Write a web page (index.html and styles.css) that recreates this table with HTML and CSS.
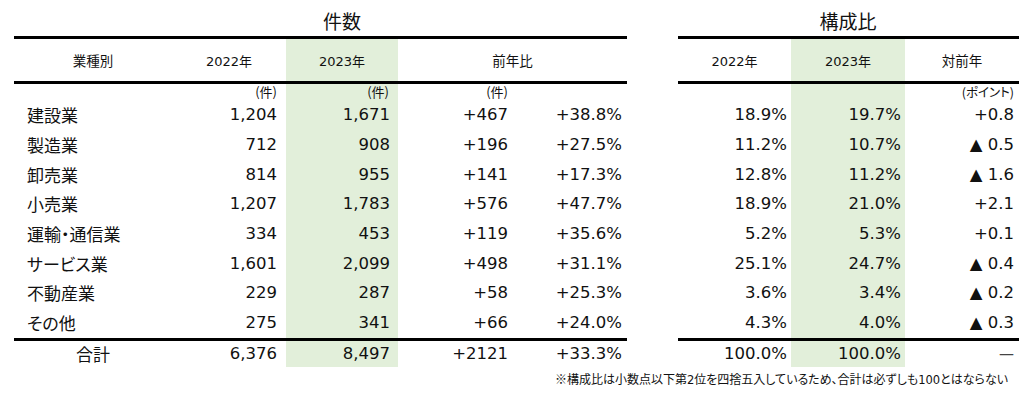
FILE: index.html
```html
<!DOCTYPE html>
<html lang="ja">
<head>
<meta charset="utf-8">
<link rel="stylesheet" href="styles.css">
</head>
<body>
<div class="page">
  <div class="tables">
    <section class="panel left">
      <div class="row title-row"><div class="title c3">件数</div></div>
      <div class="row head">
        <div class="cell">業種別</div>
        <div class="cell">2022年</div>
        <div class="cell green">2023年</div>
        <div class="cell span2">前年比</div>
      </div>
      <div class="row unit">
        <div class="cell"></div>
        <div class="cell num">(件)</div>
        <div class="cell num green">(件)</div>
        <div class="cell num u4">(件)</div>
        <div class="cell"></div>
      </div>
      <div class="row data"><div class="cell label">建設業</div><div class="cell num">1,204</div><div class="cell num green">1,671</div><div class="cell num">+467</div><div class="cell num">+38.8%</div></div>
      <div class="row data"><div class="cell label">製造業</div><div class="cell num">712</div><div class="cell num green">908</div><div class="cell num">+196</div><div class="cell num">+27.5%</div></div>
      <div class="row data"><div class="cell label">卸売業</div><div class="cell num">814</div><div class="cell num green">955</div><div class="cell num">+141</div><div class="cell num">+17.3%</div></div>
      <div class="row data"><div class="cell label">小売業</div><div class="cell num">1,207</div><div class="cell num green">1,783</div><div class="cell num">+576</div><div class="cell num">+47.7%</div></div>
      <div class="row data"><div class="cell label">運輸・通信業</div><div class="cell num">334</div><div class="cell num green">453</div><div class="cell num">+119</div><div class="cell num">+35.6%</div></div>
      <div class="row data"><div class="cell label">サービス業</div><div class="cell num">1,601</div><div class="cell num green">2,099</div><div class="cell num">+498</div><div class="cell num">+31.1%</div></div>
      <div class="row data"><div class="cell label">不動産業</div><div class="cell num">229</div><div class="cell num green">287</div><div class="cell num">+58</div><div class="cell num">+25.3%</div></div>
      <div class="row data"><div class="cell label">その他</div><div class="cell num">275</div><div class="cell num green">341</div><div class="cell num">+66</div><div class="cell num">+24.0%</div></div>
      <div class="row total"><div class="cell label center">合計</div><div class="cell num">6,376</div><div class="cell num green">8,497</div><div class="cell num">+2121</div><div class="cell num">+33.3%</div></div>
    </section>

    <section class="panel right">
      <div class="row title-row"><div class="title c2">構成比</div></div>
      <div class="row head">
        <div class="cell">2022年</div>
        <div class="cell green">2023年</div>
        <div class="cell">対前年</div>
      </div>
      <div class="row unit">
        <div class="cell"></div>
        <div class="cell green"></div>
        <div class="cell num u3">(ポイント)</div>
      </div>
      <div class="row data"><div class="cell num">18.9%</div><div class="cell num green">19.7%</div><div class="cell num">+0.8</div></div>
      <div class="row data"><div class="cell num">11.2%</div><div class="cell num green">10.7%</div><div class="cell num">▲ 0.5</div></div>
      <div class="row data"><div class="cell num">12.8%</div><div class="cell num green">11.2%</div><div class="cell num">▲ 1.6</div></div>
      <div class="row data"><div class="cell num">18.9%</div><div class="cell num green">21.0%</div><div class="cell num">+2.1</div></div>
      <div class="row data"><div class="cell num">5.2%</div><div class="cell num green">5.3%</div><div class="cell num">+0.1</div></div>
      <div class="row data"><div class="cell num">25.1%</div><div class="cell num green">24.7%</div><div class="cell num">▲ 0.4</div></div>
      <div class="row data"><div class="cell num">3.6%</div><div class="cell num green">3.4%</div><div class="cell num">▲ 0.2</div></div>
      <div class="row data"><div class="cell num">4.3%</div><div class="cell num green">4.0%</div><div class="cell num">▲ 0.3</div></div>
      <div class="row total"><div class="cell num">100.0%</div><div class="cell num green">100.0%</div><div class="cell num dash">—</div></div>
    </section>
  </div>
  <p class="note">※構成比は小数点以下第<span class="lat">2</span>位を四捨五入しているため、合計は必ずしも<span class="lat">100</span>とはならない</p>
</div>
</body>
</html>
```

FILE: styles.css
```css
* { box-sizing: border-box; }
html, body { margin: 0; padding: 0; background: #fff; }
body {
  font-family: "DejaVu Sans", "Noto Sans CJK JP", sans-serif;
  color: #111;
  width: 1032px;
  height: 401px;
  overflow: hidden;
}
.tables {
  display: flex;
  gap: 51px;
  padding-left: 14px;
}
.panel.left { width: 613px; }
.panel.right { width: 341px; }
.left .row { display: grid; grid-template-columns: 158px 114px 112px 115px 114px; }
.right .row { display: grid; grid-template-columns: 113px 114px 114px; }

.cell { display: flex; align-items: center; min-width: 0; white-space: nowrap; }
.green { background: #e2efda; }

.title-row { height: 36px; }
.title {
  font-family: "Noto Sans CJK JP", sans-serif;
  font-size: 19px;
  line-height: 24px;
  padding-top: 9px;
  text-align: center;
}
.left .title.c3 { grid-column: 3; }
.right .title.c2 { grid-column: 2; }

.row.head {
  height: 48px;
  border-top: 3px solid #000;
  border-bottom: 3px solid #000;
}
.row.head .cell {
  justify-content: center;
  font-family: "DejaVu Sans", "Noto Sans CJK JP", sans-serif;
  font-size: 13px;
}
.row.head .jp,
.left .row.head .cell:first-child,
.left .row.head .span2,
.right .row.head .cell:last-child {
  font-family: "Noto Sans CJK JP", sans-serif;
  font-size: 13.5px;
}
.left .row.head .span2 { grid-column: span 2; }

.row.unit { height: 16px; }
.row.unit .cell {
  font-family: "Noto Sans CJK JP", sans-serif;
  font-size: 13px;
  line-height: 16px;
  font-feature-settings: "palt";
}
.left .row.unit .cell:nth-child(2) { padding-right: 9px; }
.left .row.unit .cell:nth-child(3) { padding-right: 9px; }
.left .row.unit .u4 { padding-right: 10px; }
.right .row.unit .u3 { padding-right: 9px; font-size: 12.5px; }

.row.data { height: 29.7px; font-size: 16.5px; }
.row.total { height: 26px; font-size: 16.5px; border-top: 3px solid #000; box-sizing: content-box; }

.num { justify-content: flex-end; }
.label {
  font-family: "Noto Sans CJK JP", sans-serif;
  font-size: 17px;
  padding-left: 13px;
  font-feature-settings: "palt";
}
.label.center { justify-content: center; padding-left: 0; }

.left .cell:nth-child(2).num { padding-right: 9px; }
.left .cell:nth-child(3).num { padding-right: 8px; }
.left .cell:nth-child(4).num { padding-right: 5px; }
.left .cell:nth-child(5).num { padding-right: 5px; }
.right .cell:nth-child(1).num { padding-right: 4px; }
.right .cell:nth-child(2).num { padding-right: 4px; }
.right .cell:nth-child(3).num { padding-right: 5px; }
.dash { color: #444; font-size: 15px; }

.note {
  margin: 4px 0 0;
  padding-right: 24px;
  text-align: right;
  font-family: "Noto Sans CJK JP", sans-serif;
  font-size: 12px;
  line-height: 16px;
  font-feature-settings: "palt";
}
.note .lat { font-family: "DejaVu Sans", sans-serif; font-size: 11.5px; }
```
